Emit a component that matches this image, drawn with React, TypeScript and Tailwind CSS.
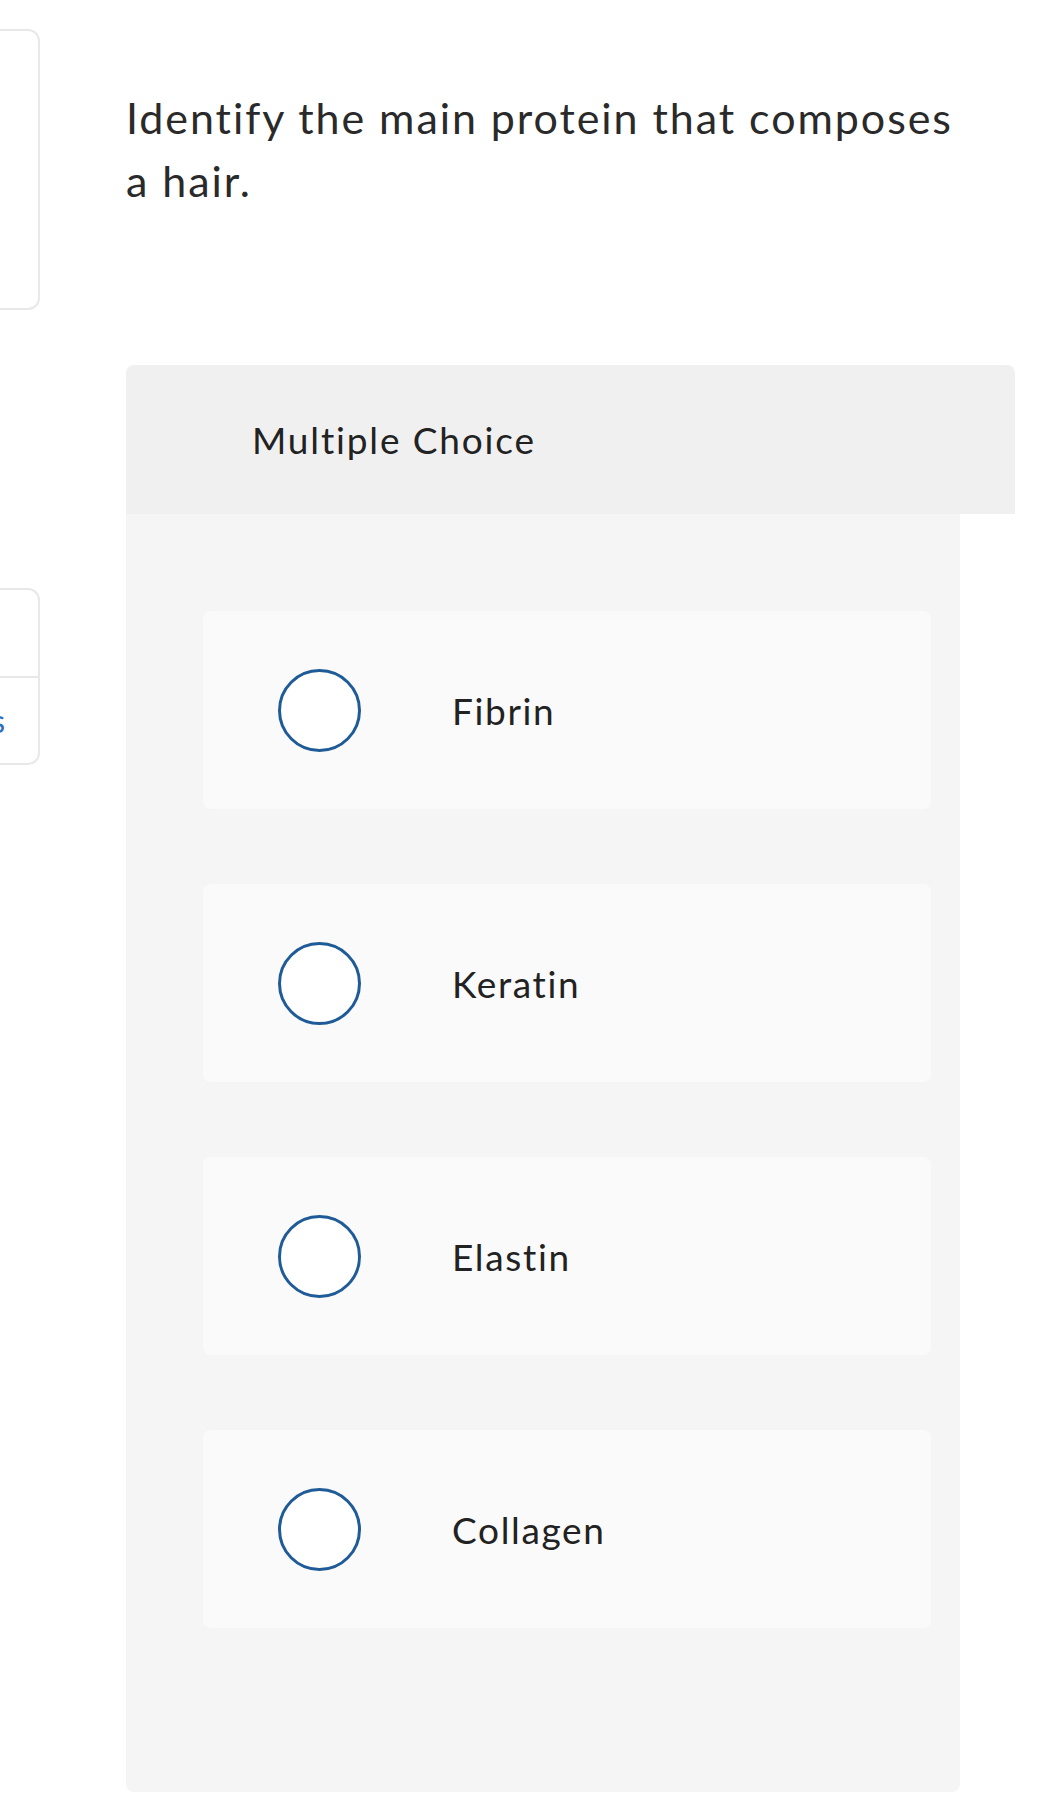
import { useState } from 'react';

const options = ['Fibrin', 'Keratin', 'Elastin', 'Collagen'];

function OptionRow({ label, selected, onSelect }: { label: string; selected: boolean; onSelect: () => void }) {
  return (
    <button
      type="button"
      onClick={onSelect}
      className="flex h-[198px] w-full items-center rounded-lg bg-[#fafafa] px-[75px] text-left"
    >
      <span className="flex h-[83px] w-[83px] shrink-0 items-center justify-center rounded-full border-[3px] border-[#1f5b96] bg-white">
        {selected && <span className="h-[41px] w-[41px] rounded-full bg-[#1f5b96]" />}
      </span>
      <span className="ml-[91px] text-[37px] leading-none tracking-[0.045em] text-[#222222]">{label}</span>
    </button>
  );
}

export default function App() {
  const [picked, setPicked] = useState<number | null>(null);

  return (
    <div className="flex min-h-[1804px] w-[1047px] bg-white font-['Lato',sans-serif]">
      {/* side panel, mostly scrolled off to the left */}
      <aside className="w-[40px] shrink-0">
        <div className="-ml-[220px] mt-[29px] h-[281px] w-[260px] rounded-[12px] border-2 border-[#e8e8e8]" />
        <div className="-ml-[220px] mt-[278px] w-[260px] rounded-[12px] border-2 border-[#e8e8e8]">
          <div className="h-[88px] border-b-2 border-[#e8e8e8]" />
          <div className="flex h-[85px] items-center justify-end pr-[33px] text-[32px] text-[#2f6fc0]">
            Resources
          </div>
        </div>
      </aside>

      <main className="ml-[86px] w-[889px]">
        <h1 className="mt-[86px] max-w-[850px] text-[43px] font-normal leading-[63px] tracking-[0.045em] text-[#2a2a2a]">
          Identify the main protein that composes a hair.
        </h1>

        <section className="mt-[153px]">
          <div className="flex h-[149px] items-center rounded-t-lg bg-[#f0f0f0] pl-[126px] text-[37px] tracking-[0.05em] text-[#222222]">
            Multiple Choice
          </div>
          <div className="w-[834px] rounded-b-lg bg-[#f5f5f5] pb-[164px] pl-[77px] pr-[29px] pt-[97px]">
            <div className="flex flex-col gap-[75px]">
              {options.map((o, i) => (
                <OptionRow key={o} label={o} selected={picked === i} onSelect={() => setPicked(i)} />
              ))}
            </div>
          </div>
        </section>
      </main>
    </div>
  );
}
